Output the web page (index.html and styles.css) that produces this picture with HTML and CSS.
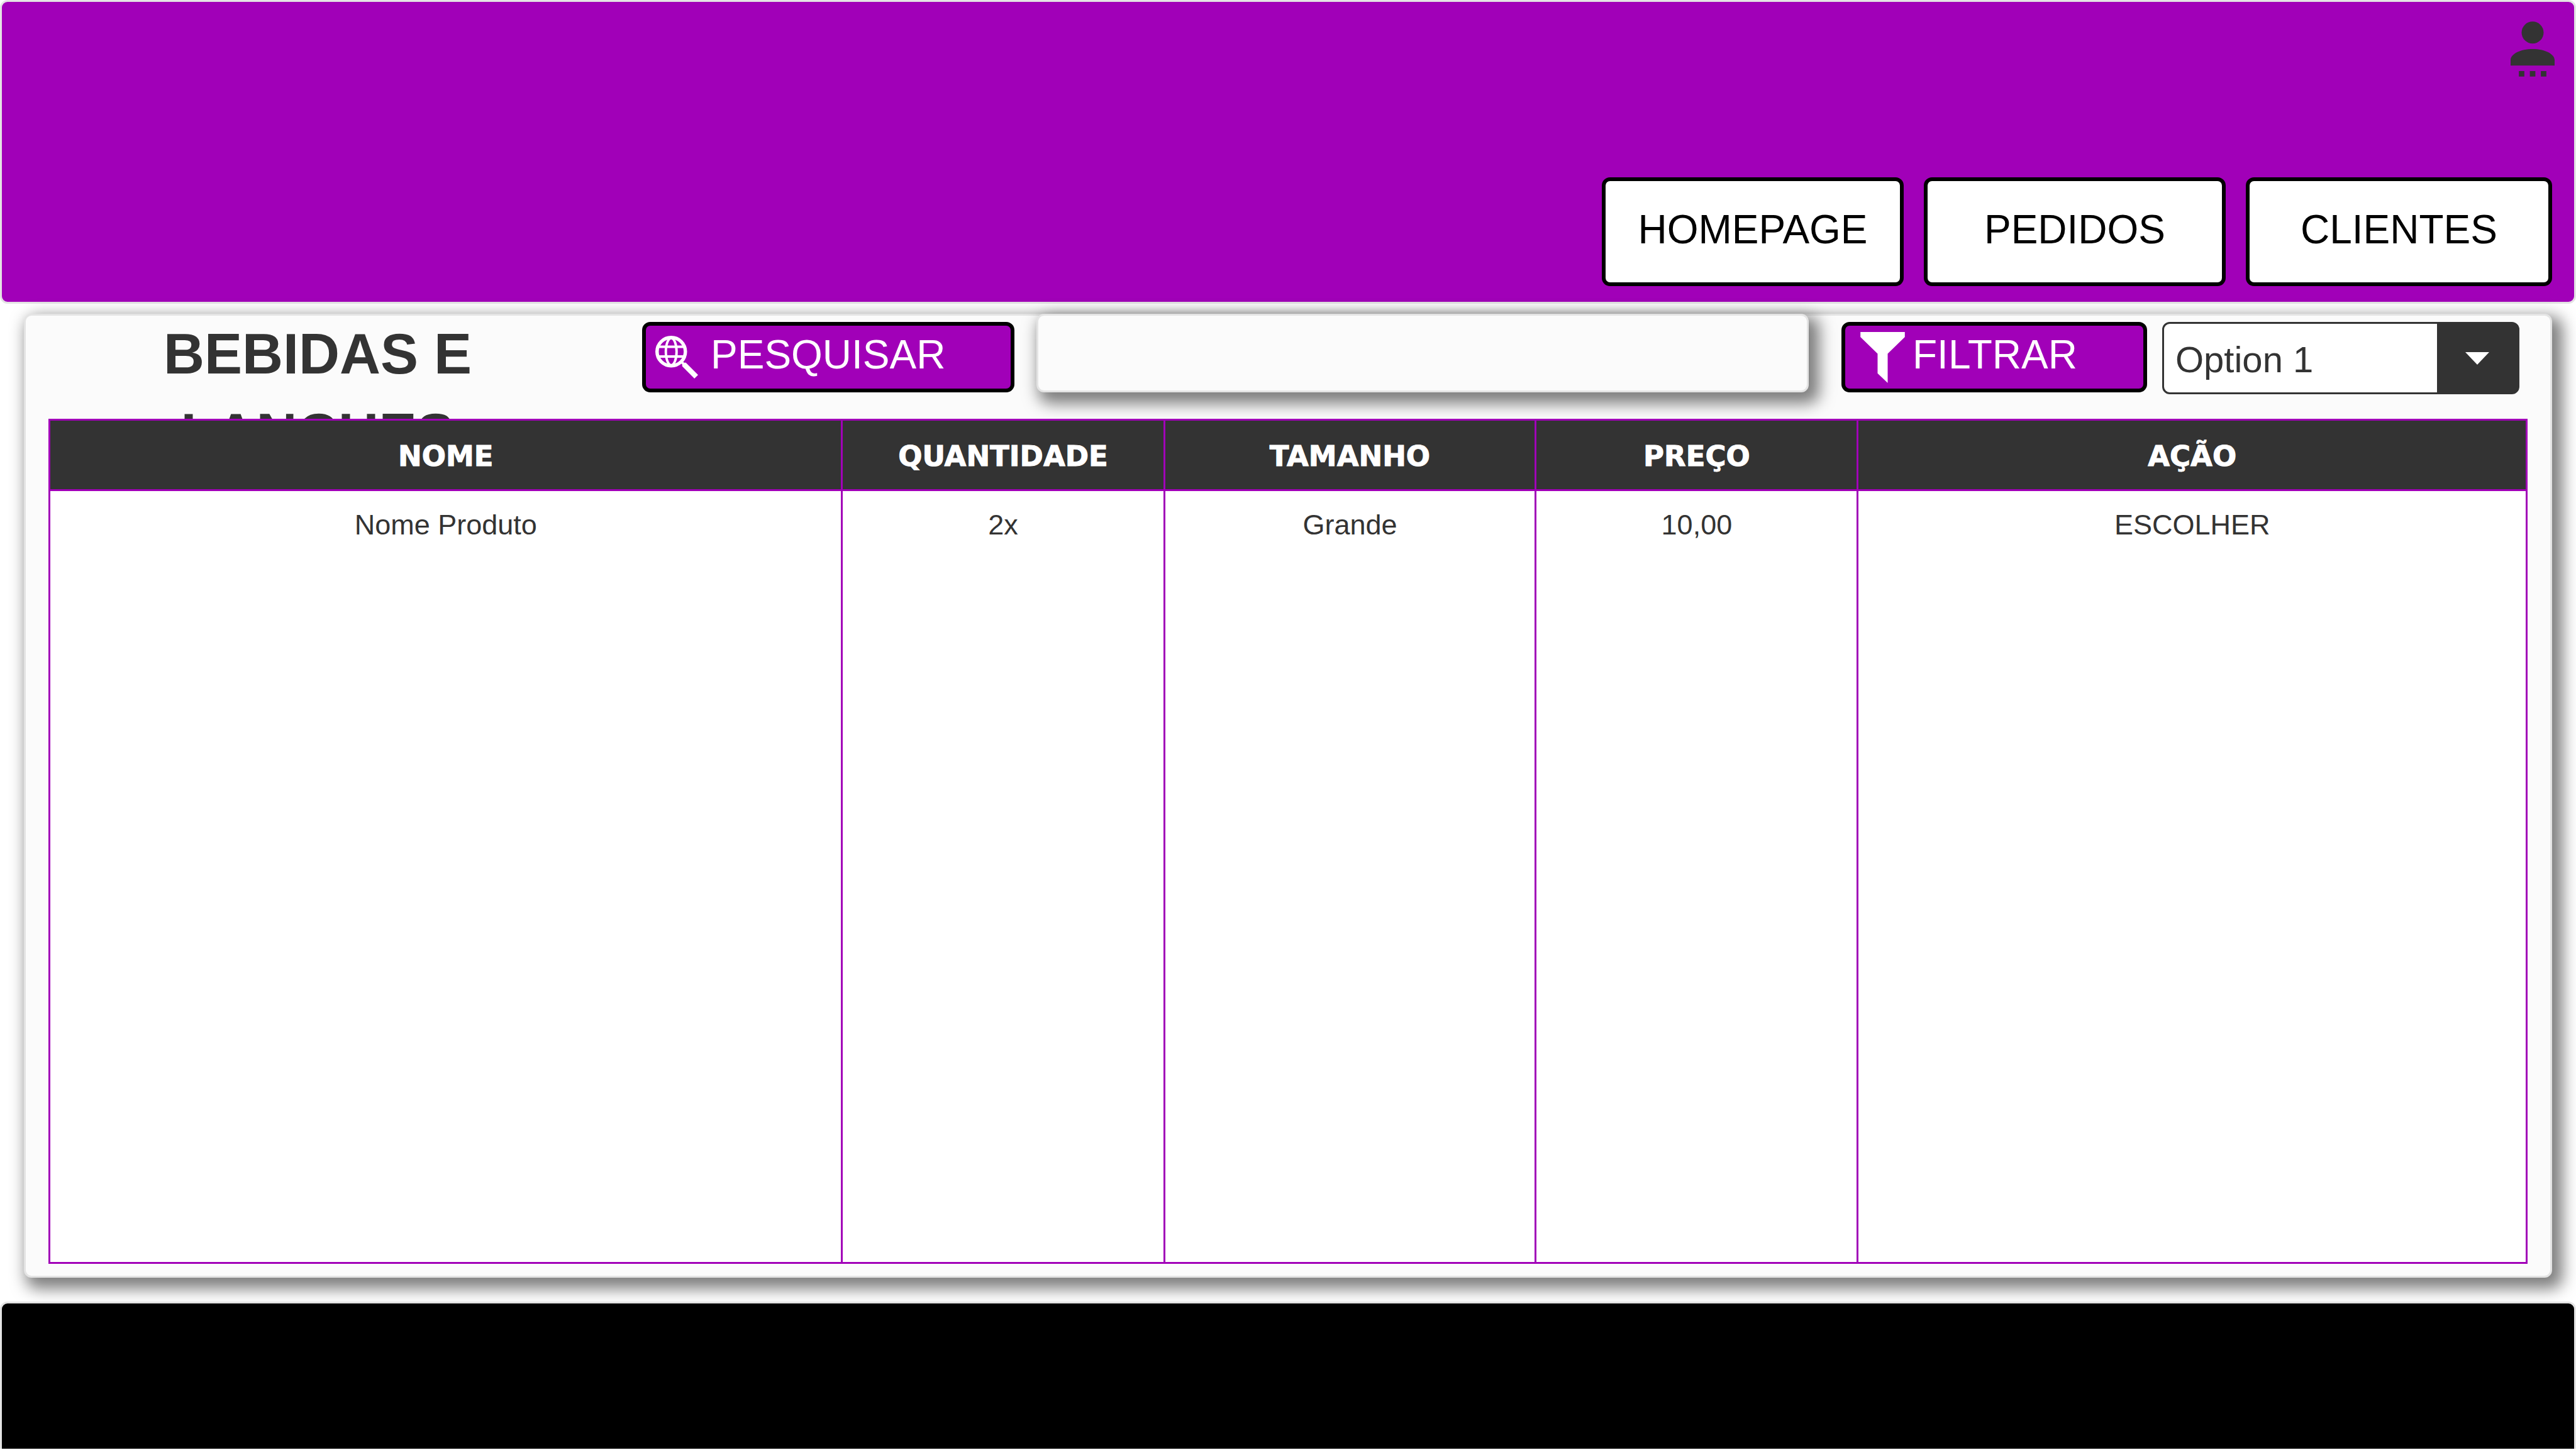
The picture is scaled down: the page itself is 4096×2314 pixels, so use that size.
FILE: index.html
```html
<!DOCTYPE html>
<html lang="pt">
<head>
  <meta charset="utf-8">
  <meta name="viewport" content="width=device-width, initial-scale=1">
  <title>Bebidas e Lanches</title>
  <link rel="stylesheet" href="styles.css">
</head>
<body class="page">
  <header class="site-header">
    <button class="account" type="button" aria-label="Conta">
      <svg class="account-icon" viewBox="4 2 16 20" aria-hidden="true">
        <circle cx="12" cy="6" r="4"/>
        <path d="M12 12c-4.42 0-8 1.79-8 4v2h16v-2c0-2.21-3.58-4-8-4zM7 20h2v2H7zM11 20h2v2h-2zM15 20h2v2h-2z"/>
      </svg>
    </button>
    <nav class="nav">
      <button class="button nav-button" type="button">HOMEPAGE</button>
      <button class="button nav-button" type="button">PEDIDOS</button>
      <button class="button nav-button nav-button-last" type="button">CLIENTES</button>
    </nav>
  </header>

  <main class="panel">
    <div class="toolbar">
      <h1 class="title">BEBIDAS E LANCHES</h1>
      <button class="button tool-button search-button" type="button">
        <svg class="search-icon" viewBox="3 3 17.5 17.5" aria-hidden="true">
          <g fill="none" stroke="currentColor">
            <circle cx="9.5" cy="9.5" r="5.8" stroke-width="1.4"/>
            <ellipse cx="9.5" cy="9.5" rx="2.2" ry="5.5" stroke-width="1"/>
            <path d="M4.5 7.5h10M4.500 11.500h10" stroke-width="1"/>
          </g>
          <path fill="currentColor" d="M15.5 14l5 5-1.500 1.500-5-5v-.79l-.6-.6.8-.8.51.69z"/>
        </svg>
        <span>PESQUISAR</span>
      </button>
      <input class="search-input" type="text" aria-label="Pesquisar">
      <button class="button tool-button filter-button" type="button">
        <svg class="filter-icon" viewBox="0 0 88 101" aria-hidden="true">
          <path fill="currentColor" d="M0 0h88v10L54 43v58L34 82V43L0 10z"/>
        </svg>
        <span>FILTRAR</span>
      </button>
      <div class="select-box">
        <select class="select" aria-label="Filtro">
          <option>Option 1</option>
        </select>
      </div>
    </div>

    <table class="products">
      <colgroup>
        <col class="col-name">
        <col class="col-quantity">
        <col class="col-size">
        <col class="col-price">
        <col class="col-action">
      </colgroup>
      <thead>
        <tr>
          <th scope="col">NOME</th>
          <th scope="col">QUANTIDADE</th>
          <th scope="col">TAMANHO</th>
          <th scope="col">PREÇO</th>
          <th scope="col">AÇÃO</th>
        </tr>
      </thead>
      <tbody>
        <tr>
          <td>Nome Produto</td>
          <td>2x</td>
          <td>Grande</td>
          <td>10,00</td>
          <td>ESCOLHER</td>
        </tr>
      </tbody>
    </table>
  </main>

  <footer class="site-footer"></footer>
</body>
</html>
```
FILE: styles.css
```css
:root {
  --purple: #a100b8;
  --dark: #333;
  --line: #e4e4e4;
  --shadow: 10px 11px 24px 7px rgba(0, 0, 0, 0.5);
}

*,
*::before,
*::after {
  box-sizing: border-box;
}

.page {
  display: flex;
  flex-direction: column;
  min-height: 100vh;
  margin: 0;
  padding-bottom: 10px;
  background: #fff;
  color: var(--dark);
  font-family: "Liberation Sans", Arial, sans-serif;
}

.site-header {
  display: flex;
  flex-direction: column;
  gap: 160px;
  padding: 31px 31px 25px;
  border: 3px solid var(--line);
  border-radius: 12px;
  background: var(--purple);
}

.account {
  align-self: flex-end;
  padding: 0;
  border: 0;
  background: none;
  color: var(--dark);
}

.account-icon {
  display: block;
  width: 70px;
  height: 88px;
  fill: currentColor;
}

.nav {
  display: flex;
  justify-content: flex-end;
  gap: 32px;
  padding-right: 4px;
}

.button {
  border: 6px solid #000;
  border-radius: 13px;
  font-family: inherit;
  font-size: 64px;
  line-height: 74px;
}

.nav-button {
  width: 480px;
  height: 173px;
  padding: 0 0 8px;
  background: #fff;
  color: #000;
}

.nav-button-last {
  width: 487px;
}

.panel {
  display: flex;
  flex: 1;
  flex-direction: column;
  margin: 16px 38px 38px;
  padding: 0 36px 19px;
  border: 3px solid var(--line);
  border-radius: 12px;
  background: #fbfbfb;
  box-shadow: var(--shadow);
}

.toolbar {
  display: flex;
  align-items: flex-start;
  height: 164px;
  padding-right: 13px;
}

/* Only the first line fits; the second is cut off at the table's edge. */
.title {
  width: 856px;
  height: 166px;
  margin: -2px 88px 0 0;
  overflow: hidden;
  font-size: 90px;
  line-height: 127px;
  text-align: center;
}

.tool-button {
  display: flex;
  align-items: center;
  height: 112px;
  margin-top: 10px;
  background: var(--purple);
  color: #fff;
}

.tool-button span {
  padding-bottom: 8px;
}

.search-button {
  gap: 20px;
  width: 592px;
  padding: 0 15px;
}

.search-icon {
  width: 68px;
  height: 68px;
}

.filter-button {
  gap: 12px;
  width: 486px;
  padding: 0 24px;
}

.filter-icon {
  width: 71px;
  height: 81px;
}

.search-input {
  flex: 1;
  min-width: 0;
  height: 125px;
  margin: -3px 52px 0 35px;
  padding: 0 24px;
  border: 3px solid var(--line);
  border-radius: 12px;
  background: #fbfbfb;
  box-shadow: var(--shadow);
  color: var(--dark);
  font-family: inherit;
  font-size: 58px;
}

.select-box {
  position: relative;
  width: 568px;
  margin: 10px 0 0 24px;
}

.select-box::after {
  content: "";
  position: absolute;
  top: 48px;
  right: 48px;
  width: 38px;
  height: 20px;
  background: #fff;
  clip-path: polygon(0 0, 100% 0, 50% 100%);
  pointer-events: none;
}

.select {
  display: block;
  width: 100%;
  height: 115px;
  padding: 4px 140px 0 18px;
  border: 3px solid var(--dark);
  border-radius: 12px;
  appearance: none;
  background: linear-gradient(var(--dark), var(--dark)) right / 128px 100% no-repeat #fff;
  color: var(--dark);
  font-family: inherit;
  font-size: 58px;
}

.products {
  position: relative;
  flex: 1;
  display: table;
  width: 100%;
  border: solid var(--purple);
  border-width: 0 3px 3px 0;
  border-collapse: separate;
  border-spacing: 0;
  table-layout: fixed;
  background: #fff;
  font-size: 45px;
  line-height: 52px;
  text-align: center;
}

.col-name {
  width: 32%;
}

.col-quantity,
.col-price {
  width: 13%;
}

.col-size {
  width: 15%;
}

.col-action {
  width: 27%;
}

.products th,
.products td {
  padding: 0;
  border: solid var(--purple);
  border-width: 3px 0 0 3px;
}

.products th {
  height: 112px;
  padding-top: 4px;
  background: var(--dark);
  color: #fff;
  font-family: "Arial Black", "DejaVu Sans", sans-serif;
  font-size: 45px;
  font-weight: 900;
  -webkit-text-stroke: 1px #fff;
}

.products td {
  padding-top: 28px;
  vertical-align: top;
}

.site-footer {
  min-height: 234px;
  border: 3px solid var(--line);
  border-bottom: 0;
  border-radius: 12px 12px 0 0;
  background: #000;
}
```
